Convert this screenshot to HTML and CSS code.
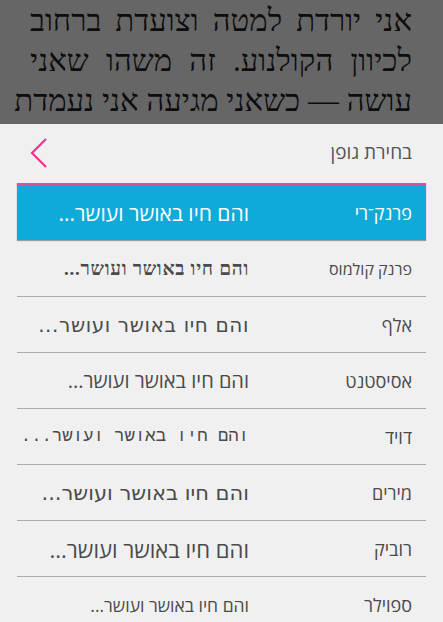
FILE: index.html
```html
<!DOCTYPE html>
<html lang="he" dir="rtl">
<head>
    <meta charset="UTF-8">
    <meta name="viewport" content="width=device-width, initial-scale=1.0">
    <title>בחירת גופן</title>
    <link rel="stylesheet" href="styles.css">
</head>
<body>
    <div class="reader">
        <div class="line">אני יורדת למטה וצועדת ברחוב</div>
        <div class="line">לכיוון הקולנוע. זה משהו שאני</div>
        <div class="line">עושה — כשאני מגיעה אני נעמדת</div>
        <div class="line">ומביטה בכרזות של הסרטים החדשים</div>
    </div>

    <div class="sheet">
        <div class="sheet-head">
            <span class="sheet-title">בחירת גופן</span>
            <svg class="back" width="18" height="32" viewBox="0 0 18 32">
                <polyline points="16,2 2,16 16,30" fill="none" stroke="#f7318f" stroke-width="2.2"/>
            </svg>
        </div>

        <ul class="font-list">
            <li class="font-row selected">
                <span class="font-name">פרנק־רי</span>
                <span class="sample frank">והם חיו באושר ועושר...</span>
            </li>
            <li class="font-row">
                <span class="font-name small">פרנק קולמוס</span>
                <span class="sample kulmus">והם חיו באושר ועושר...</span>
            </li>
            <li class="font-row">
                <span class="font-name">אלף</span>
                <span class="sample alef">והם חיו באושר ועושר...</span>
            </li>
            <li class="font-row">
                <span class="font-name">אסיסטנט</span>
                <span class="sample assistant">והם חיו באושר ועושר...</span>
            </li>
            <li class="font-row">
                <span class="font-name">דויד</span>
                <span class="sample david">והם חיו באושר ועושר...</span>
            </li>
            <li class="font-row">
                <span class="font-name">מירים</span>
                <span class="sample miriam">והם חיו באושר ועושר...</span>
            </li>
            <li class="font-row">
                <span class="font-name">רוביק</span>
                <span class="sample rubik">והם חיו באושר ועושר...</span>
            </li>
            <li class="font-row">
                <span class="font-name">ספוילר</span>
                <span class="sample spoiler">והם חיו באושר ועושר...</span>
            </li>
        </ul>
    </div>
</body>
</html>
```

FILE: styles.css
```css
body {
    margin: 0;
    height: 622px;
    overflow: hidden;
    background-color: #f0f0f0;
    font-family: "Open Sans", "DejaVu Sans", sans-serif;
}
.reader {
    height: 123px;
    overflow: hidden;
    background-color: #666;
    color: #0d0d0d;
    padding: 1px 31px 0 30px;
    font-family: "Liberation Serif", serif;
    font-size: 31px;
    line-height: 40px;
}
.line {
    text-align: justify;
    text-align-last: justify;
    white-space: nowrap;
}
.sheet {
    background-color: #f0f0f0;
}
.sheet-head {
    height: 59px;
    display: flex;
    align-items: center;
    justify-content: space-between;
    padding: 0 31px 0 30px;
}
.sheet-title {
    font-size: 19px;
    color: #555;
    margin-top: -4px;
}
.back {
    display: block;
    margin-top: -2px;
}
.font-list {
    list-style: none;
    margin: 0 17px;
    padding: 0;
}
.font-row {
    height: 55px;
    display: flex;
    align-items: center;
    border-bottom: 1px solid #aaa;
    padding-right: 14px;
    color: #4a4a4a;
}
.font-row.selected {
    border-top: 2px solid #d9539a;
    border-bottom: none;
    background-color: #10aad9;
    color: #fff;
    box-shadow: 0 1px 1px rgba(0, 0, 0, 0.35);
    margin-bottom: 1px;
}
.font-name {
    width: 163px;
    font-size: 18px;
}
.font-name.small {
    font-size: 16px;
}
.sample {
    white-space: nowrap;
}
.frank {
    font-family: "Open Sans", sans-serif;
    font-size: 21px;
}
.kulmus {
    font-family: "Liberation Serif", serif;
    font-size: 19px;
    font-weight: bold;
    letter-spacing: 0.7px;
}
.alef {
    font-family: "DejaVu Sans", sans-serif;
    font-size: 20px;
    letter-spacing: 0.6px;
}
.assistant {
    font-family: "Open Sans", sans-serif;
    font-size: 20px;
}
.david {
    font-family: "Liberation Mono", monospace;
    font-size: 17.3px;
}
.miriam {
    font-family: "DejaVu Sans", sans-serif;
    font-size: 21px;
}
.rubik {
    font-family: "Open Sans", sans-serif;
    font-size: 22px;
    font-weight: 500;
}
.spoiler {
    font-family: "Open Sans", sans-serif;
    font-size: 17.5px;
}
```
